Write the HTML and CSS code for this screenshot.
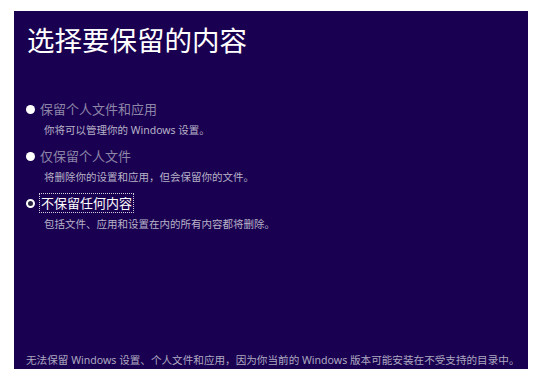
FILE: index.html
```html
<!DOCTYPE html>
<html lang="zh-CN">
<head>
  <meta charset="UTF-8">
  <title>选择要保留的内容</title>
  <link rel="stylesheet" href="styles.css">
</head>
<body>

  <div class="panel">
    <h1>选择要保留的内容</h1>

    <div class="options">
      <div class="option">
        <div class="option-label"><span class="dot"></span>保留个人文件和应用</div>
        <p class="option-desc">你将可以管理你的 Windows 设置。</p>
      </div>

      <div class="option">
        <div class="option-label"><span class="dot"></span>仅保留个人文件</div>
        <p class="option-desc">将删除你的设置和应用，但会保留你的文件。</p>
      </div>

      <div class="option selected">
        <div class="option-label"><span class="dot"></span><span class="focus">不保留任何内容</span></div>
        <p class="option-desc">包括文件、应用和设置在内的所有内容都将删除。</p>
      </div>
    </div>

    <p class="footer-note">无法保留 Windows 设置、个人文件和应用，因为你当前的 Windows 版本可能安装在不受支持的目录中。</p>
  </div>

</body>
</html>
```

FILE: styles.css
```css
body {
  margin: 0;
  background-color: #ffffff;
  font-family: "Noto Sans", "Noto Sans CJK SC", sans-serif;
}

.panel {
  margin: 11px 0 0 14px;
  width: 514px;
  height: 358px;
  background-color: #1a0050;
  padding: 0 12px;
  box-sizing: border-box;
  display: flex;
  flex-direction: column;
}

.panel h1 {
  margin: 12px 0 0 1px;
  font-size: 27.5px;
  font-weight: normal;
  color: #ffffff;
  line-height: 36px;
}

.options {
  margin-top: 41px;
  display: flex;
  flex-direction: column;
  gap: 9px;
}

.option-label {
  display: flex;
  align-items: center;
  font-size: 13px;
  line-height: 18px;
  color: #8c86a8;
}

.dot {
  width: 9px;
  height: 9px;
  border-radius: 50%;
  background-color: #ffffff;
  margin-right: 5px;
  flex-shrink: 0;
}

.option-desc {
  margin: 4px 0 0 18px;
  font-size: 10.5px;
  line-height: 16px;
  color: #b6b2c8;
}

.selected .option-label {
  color: #ffffff;
}

.selected .dot {
  width: 5px;
  height: 5px;
  background-color: #2a2440;
  border: 2px solid #ffffff;
}

.focus {
  outline: 1px dotted #d0cce0;
  outline-offset: 0;
  padding: 0 1px;
}

.footer-note {
  margin: auto 0 1px 0;
  font-size: 10.6px;
  line-height: 16px;
  color: #aca8c0;
  white-space: nowrap;
}
```
